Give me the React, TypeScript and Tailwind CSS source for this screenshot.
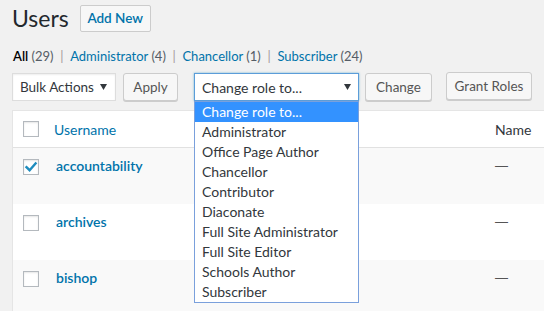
import React from "react";

const roles = [
  "Change role to...",
  "Administrator",
  "Office Page Author",
  "Chancellor",
  "Contributor",
  "Diaconate",
  "Full Site Administrator",
  "Full Site Editor",
  "Schools Author",
  "Subscriber",
];

const users = [
  { name: "accountability", checked: true },
  { name: "archives", checked: false },
  { name: "bishop", checked: false },
];

function Checkbox({ checked }: { checked?: boolean }) {
  return (
    <div className="w-[16px] h-[16px] border border-[#b4b9be] bg-white shadow-[inset_0_1px_2px_rgba(0,0,0,0.1)] flex items-center justify-center">
      {checked && (
        <svg width="14" height="14" viewBox="0 0 14 14">
          <path d="M2.5 7.2 L5.6 10.2 L11.6 3.4" fill="none" stroke="#1e8cbe" strokeWidth="2.4" strokeLinecap="square" />
        </svg>
      )}
    </div>
  );
}

function Arrow() {
  return (
    <svg width="7" height="6" viewBox="0 0 7 6" className="shrink-0">
      <path d="M0 0 H7 L3.5 6 Z" fill="#32373c" />
    </svg>
  );
}

export default function App() {
  return (
    <div className="w-[544px] h-[311px] bg-[#f1f1f1] overflow-hidden pl-[12px] pt-[5px] text-[#23282d] font-['Lato',sans-serif]">
      {/* Title */}
      <div className="flex items-center h-[27px]">
        <h1 className="text-[23px] leading-[27px] font-normal text-[#23282d]">Users</h1>
        <button className="ml-[11px] h-[27px] w-[71px] border border-[#ccc] bg-[#f7f7f7] rounded-[2px] text-[#0073aa] text-[13.5px] font-semibold">
          Add New
        </button>
      </div>

      {/* Filters */}
      <div className="mt-[15px] h-[18px] leading-[18px] text-[13px] flex items-center whitespace-pre pl-[1px]">
        <span className="text-black font-semibold">All</span>
        <span className="text-[#555d66]"> (29)</span>
        <span className="text-[#a59a9a]">  |  </span>
        <span className="text-[#0073aa]">Administrator <span className="text-[#555d66]">(4)</span></span>
        <span className="text-[#a59a9a]">  |  </span>
        <span className="text-[#0073aa]">Chancellor <span className="text-[#555d66]">(1)</span></span>
        <span className="text-[#a59a9a]">  |  </span>
        <span className="text-[#0073aa]">Subscriber <span className="text-[#555d66]">(24)</span></span>
      </div>

      {/* Controls */}
      <div className="mt-[8px] h-[28px] flex items-stretch text-[14px]">
        <div className="w-[104px] border border-[#ddd] bg-white flex items-center justify-between pl-[7px] pr-[8px] text-[13.5px] text-[#32373c] shadow-[inset_0_1px_2px_rgba(0,0,0,0.07)]">
          <span>Bulk Actions</span>
          <Arrow />
        </div>
        <button className="ml-[7px] w-[55px] border border-[#ccc] bg-[#f7f7f7] rounded-[3px] shadow-[0_1px_0_#ccc] text-[#555] text-[13.5px]">
          Apply
        </button>
        <div className="relative ml-[16px] w-[165px]">
          <div className="h-full border border-[#5b9dd9] bg-white flex items-center justify-between pl-[7px] pr-[7px] text-[#32373c] shadow-[0_0_2px_rgba(30,140,190,0.6)]">
            <span>Change role to...</span>
            <Arrow />
          </div>
          <div className="absolute left-0 top-full w-[165px] border border-[#7aa0dc] bg-white z-10">
            {roles.map((r, i) => (
              <div
                key={r}
                className={
                  "h-[20px] leading-[20px] pl-[7px] " +
                  (i === 0 ? "bg-[#3392ff] text-white" : "text-[#32373c]")
                }
              >
                {r}
              </div>
            ))}
          </div>
        </div>
        <button className="ml-[6px] w-[67px] border border-[#ccc] bg-[#f7f7f7] rounded-[3px] shadow-[0_1px_0_#ccc] text-[#555] text-[13.5px]">
          Change
        </button>
        <button className="ml-[14px] w-[86px] border border-[#ccc] bg-[#f7f7f7] rounded-[3px] shadow-[0_1px_0_#ccc] text-[#555] text-[13.5px] -mt-[1px] mb-[1px]">
          Grant Roles
        </button>
      </div>

      {/* Table */}
      <div className="mt-[9px] w-[560px] border-t border-l border-[#e5e5e5] bg-white text-[14px]">
        <div className="h-[37px] flex border-b border-[#e1e1e1]">
          <div className="w-[41px] pl-[10px] pt-[10px]">
            <Checkbox />
          </div>
          <div className="w-[441px] pt-[8px] text-[#0073aa]">Username</div>
          <div className="pt-[8px] text-[#32373c]">Name</div>
        </div>
        {users.map((u, i) => (
          <div key={u.name} className={"h-[56px] flex " + (i % 2 === 0 ? "bg-[#f9f9f9]" : "bg-white")}>
            <div className="w-[41px] pl-[10px] pt-[11px]">
              <Checkbox checked={u.checked} />
            </div>
            <div className="w-[441px] pl-[2px] pt-[7px] text-[#0073aa] font-semibold">{u.name}</div>
            <div className="pt-[8px] text-[#555] font-['Liberation_Sans',sans-serif] text-[13px]">—</div>
          </div>
        ))}
      </div>
    </div>
  );
}
